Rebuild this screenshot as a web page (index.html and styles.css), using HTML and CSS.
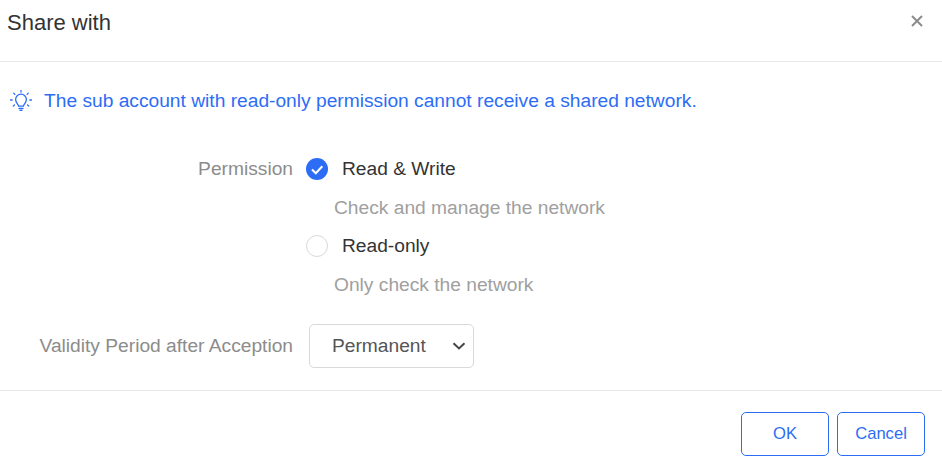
FILE: index.html
```html
<!DOCTYPE html>
<html lang="en">
<head>
    <meta charset="UTF-8">
    <title>Share with</title>
    <link rel="stylesheet" href="styles.css">
</head>
<body>

    <div class="dialog">
        <div class="dialog-header">
            <h1>Share with</h1>
            <button class="close" aria-label="Close">
                <svg width="12" height="12" viewBox="0 0 12 12"><path d="M1 1L11 11M11 1L1 11" stroke="#8c8c8c" stroke-width="2" fill="none"/></svg>
            </button>
        </div>

        <div class="dialog-body">
            <div class="tip">
                <svg width="24" height="24" viewBox="0 0 24 24" fill="none" stroke="#2d6df6" stroke-width="1.3" stroke-linecap="round">
                    <path d="M9.6 17.2c0-2-3-3.2-3-6.7a5.4 5.4 0 0 1 10.8 0c0 3.500-3 4.700-3 6.700z"/>
                    <path d="M10 19.500h4M11 21.300h2"/>
                    <path d="M12 1.500v1.500M4.800 4.300l1.100 1.100M19.200 4.300l-1.100 1.100M1.500 11h1.700M20.800 11h1.700M4.300 17l1.200-1M19.700 17l-1.200-1"/>
                </svg>
                <span>The sub account with read-only permission cannot receive a shared network.</span>
            </div>

            <div class="form-row">
                <div class="form-label">Permission</div>
                <div class="options">
                    <label class="radio">
                        <span class="radio-mark checked">
                            <svg width="22" height="22" viewBox="0 0 22 22"><path d="M6 11.500L9.800 15.200L16.300 8.300" stroke="#fff" stroke-width="2" fill="none"/></svg>
                        </span>
                        Read &amp; Write
                    </label>
                    <p class="hint">Check and manage the network</p>
                    <label class="radio">
                        <span class="radio-mark"></span>
                        Read-only
                    </label>
                    <p class="hint">Only check the network</p>
                </div>
            </div>

            <div class="form-row period">
                <div class="form-label">Validity Period after Acception</div>
                <div class="select">
                    <span>Permanent</span>
                    <svg width="14" height="8" viewBox="0 0 14 8"><path d="M1.500 1.200L7 6.400L12.500 1.200" stroke="#444" stroke-width="2" fill="none"/></svg>
                </div>
            </div>
        </div>

        <div class="dialog-footer">
            <button class="button">OK</button>
            <button class="button">Cancel</button>
        </div>
    </div>

</body>
</html>
```

FILE: styles.css
```css
* {
    margin: 0;
    padding: 0;
    box-sizing: border-box;
}

body {
    font-family: 'Liberation Sans', Arial, sans-serif;
    background-color: #fff;
    color: #333;
    overflow: hidden;
}

.dialog {
    width: 942px;
    height: 472px;
}

.dialog-header {
    height: 62px;
    padding: 11px 19px 0 7px;
    display: flex;
    justify-content: space-between;
    border-bottom: 1px solid #e8e8e8;
}

.dialog-header h1 {
    font-size: 22px;
    font-weight: normal;
    line-height: 24px;
    color: #333;
}

.close {
    width: 12px;
    height: 12px;
    margin-top: 4px;
    border: 0;
    background: none;
    display: flex;
}

.dialog-body {
    height: 328px;
    padding-top: 27px;
}

.tip {
    display: flex;
    align-items: center;
    height: 24px;
    padding-left: 9px;
    gap: 11px;
    color: #2d6df6;
    font-size: 19.2px;
}

.form-row {
    display: flex;
    margin-top: 44px;
}

.form-label {
    width: 293px;
    text-align: right;
    font-size: 19.2px;
    line-height: 24px;
    color: #8c8c8c;
}

.options {
    padding-left: 13px;
    width: 400px;
}

.radio {
    display: flex;
    align-items: center;
    height: 24px;
    font-size: 19.2px;
    color: #333;
}

.radio-mark {
    width: 22px;
    height: 22px;
    margin-right: 14px;
    border-radius: 50%;
    border: 1px solid #d9d9d9;
    display: block;
}

.radio-mark.checked {
    border: 0;
    background-color: #2d6df6;
}

.hint {
    padding-left: 28px;
    margin: 15px 0 14px;
    font-size: 19.2px;
    line-height: 24px;
    color: #a0a0a0;
}

.form-row.period {
    margin-top: 13px;
    align-items: center;
}

.select {
    width: 165px;
    height: 44px;
    margin-left: 16px;
    padding: 0 7px 0 22px;
    display: flex;
    align-items: center;
    justify-content: space-between;
    border: 1px solid #d9d9d9;
    border-radius: 5px;
    font-size: 19.2px;
    color: #555;
}

.dialog-footer {
    border-top: 1px solid #e8e8e8;
    padding: 21px 17px 0 0;
    display: flex;
    justify-content: flex-end;
    gap: 8px;
}

.button {
    width: 88px;
    height: 44px;
    background-color: #fff;
    border: 1px solid #2d6df6;
    border-radius: 5px;
    color: #2d6df6;
    font-family: inherit;
    font-size: 16.6px;
}
```
